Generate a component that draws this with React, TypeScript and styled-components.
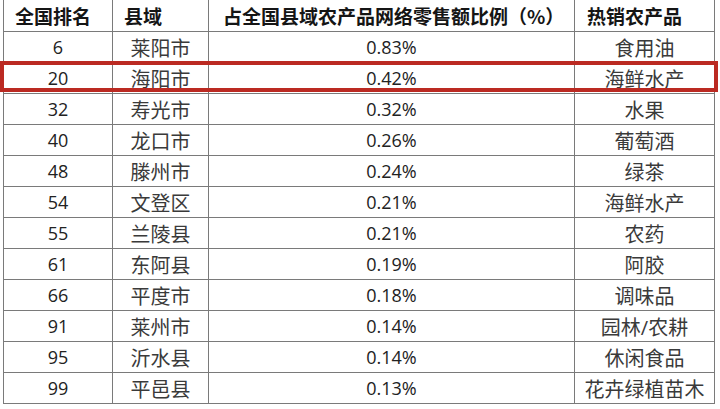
import React from "react";
import styled, { createGlobalStyle } from "styled-components";

const Global = createGlobalStyle`
  html, body { margin: 0; padding: 0; background: #ffffff; }
  body { width: 720px; height: 409px; overflow: hidden; }
`;

const Page = styled.div`
  position: relative;
  width: 720px;
  height: 409px;
  background: #ffffff;
  padding-left: 3px;
  box-sizing: border-box;
`;

const Table = styled.div`
  display: grid;
  grid-template-columns: 109px 96px 366px 140px;
  grid-template-rows: 32px;
  grid-auto-rows: 31px;
  border-left: 1px solid #7a7a7a;
  width: max-content;
`;

const HeadCell = styled.div<{ $pad?: number }>`
  box-sizing: border-box;
  display: flex;
  align-items: center;
  padding-left: ${(p) => p.$pad ?? 11}px;
  border-right: 1px solid #7a7a7a;
  border-bottom: 1px solid #7a7a7a;
  font-family: "Noto Sans CJK SC", "Open Sans", sans-serif;
  font-size: 19px;
  font-weight: 700;
  color: #151515;
  white-space: nowrap;
  overflow: hidden;
`;

const Cell = styled.div<{ $num?: boolean }>`
  box-sizing: border-box;
  display: flex;
  align-items: center;
  justify-content: center;
  border-right: 1px solid #7a7a7a;
  border-bottom: 1px solid #7a7a7a;
  font-family: "Open Sans", "Noto Sans CJK SC", sans-serif;
  font-size: ${(p) => (p.$num ? 18 : 20)}px;
  color: ${(p) => (p.$num ? "#222" : "#3a3a3a")};
  white-space: nowrap;
`;

const Highlight = styled.div`
  position: absolute;
  left: 0;
  top: 61px;
  width: 718px;
  height: 31px;
  box-sizing: border-box;
  border: 4px solid #bb2a22;
  pointer-events: none;
`;

const rows: [string, string, string, string][] = [
  ["6", "莱阳市", "0.83%", "食用油"],
  ["20", "海阳市", "0.42%", "海鲜水产"],
  ["32", "寿光市", "0.32%", "水果"],
  ["40", "龙口市", "0.26%", "葡萄酒"],
  ["48", "滕州市", "0.24%", "绿茶"],
  ["54", "文登区", "0.21%", "海鲜水产"],
  ["55", "兰陵县", "0.21%", "农药"],
  ["61", "东阿县", "0.19%", "阿胶"],
  ["66", "平度市", "0.18%", "调味品"],
  ["91", "莱州市", "0.14%", "园林/农耕"],
  ["95", "沂水县", "0.14%", "休闲食品"],
  ["99", "平邑县", "0.13%", "花卉绿植苗木"],
];

export default function App() {
  return (
    <Page>
      <Global />
      <Table>
        <HeadCell>全国排名</HeadCell>
        <HeadCell>县域</HeadCell>
        <HeadCell $pad={14}>占全国县域农产品网络零售额比例（%）</HeadCell>
        <HeadCell $pad={12}>热销农产品</HeadCell>
        {rows.map((r) => (
          <React.Fragment key={r[0]}>
            <Cell $num>{r[0]}</Cell>
            <Cell>{r[1]}</Cell>
            <Cell $num>{r[2]}</Cell>
            <Cell>{r[3]}</Cell>
          </React.Fragment>
        ))}
      </Table>
      <Highlight />
    </Page>
  );
}
